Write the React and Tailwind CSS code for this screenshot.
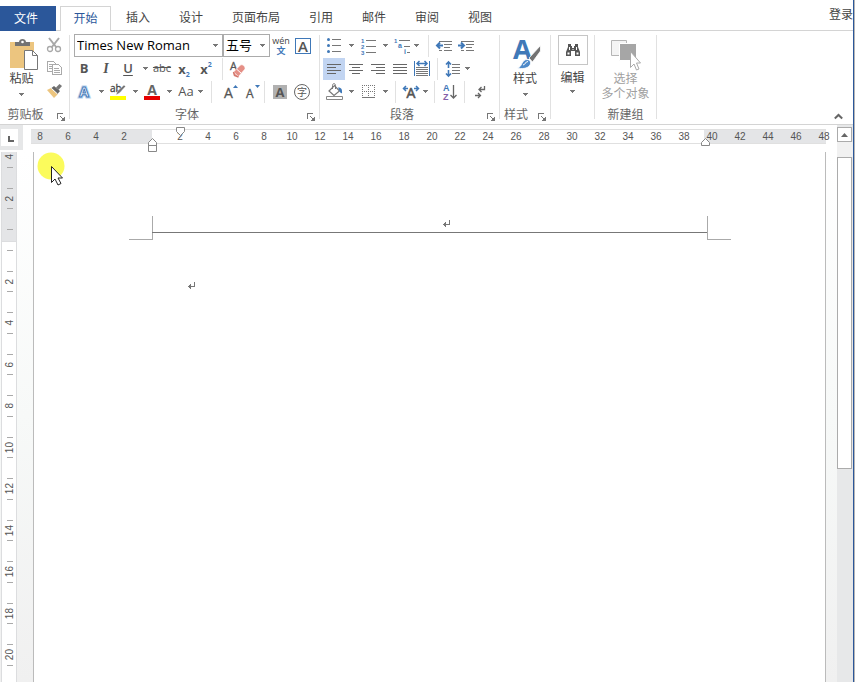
import React from 'react'

const TABS = ['插入', '设计', '页面布局', '引用', '邮件', '审阅', '视图']
const H_RULER = [8, 6, 4, 2, '', ...Array.from({ length: 24 }, (_, i) => (i + 1) * 2)]
const V_RULER = [4, 2, '', ...Array.from({ length: 11 }, (_, i) => (i + 1) * 2)]

const SANS = "font-['Open_Sans','Noto_Sans_CJK_SC',sans-serif]"

/* ---------- small ribbon parts ---------- */

const Arrow = ({ className = '' }) => (
  <svg width="5" height="3" viewBox="0 0 5 3" className={className} shapeRendering="crispEdges">
    <path d="M0 0h5v1H4v1H3v1H2V2H1V1H0z" fill="#777" />
  </svg>
)

const Caret = ({ label, className = 'justify-center' }) => (
  <button aria-label={label} className={`flex h-[22px] w-3 shrink-0 items-center ${className}`}>
    <Arrow />
  </button>
)

const Tool = ({ label, active, children }) => (
  <button
    aria-label={label}
    className={`flex h-[22px] w-[22px] shrink-0 items-center justify-center ${active ? 'bg-[#c2d5f2]' : ''}`}
  >
    {children}
  </button>
)

const Sep = ({ className = '' }) => <div className={`h-[22px] w-px shrink-0 bg-[#e1e1e1] ${className}`} />

const Row = ({ children }) => <div className="flex h-[23px] items-center">{children}</div>

const Launcher = ({ label }) => (
  <button aria-label={label} className="mt-1 shrink-0">
    <svg width="8" height="8" viewBox="0 0 8 8" fill="none" stroke="#777" shapeRendering="crispEdges">
      <path d="M.5 6V.5H6M3 3l4 4M7.5 4v3.500H4M6.500 5v1.500H5" />
    </svg>
  </button>
)

const Group = ({ label, launcher, className = '', children }) => (
  <>
    <section aria-label={label} className={`flex shrink-0 flex-col pt-[3px] ${className}`}>
      <div className="h-[69px]">{children}</div>
      <div className={`flex h-[21px] items-center pt-0.5 text-[#666] ${launcher ? 'pr-1' : ''}`}>
        <span className={`flex-1 text-center ${launcher ? 'pr-1.5' : ''}`}>{label}</span>
        {launcher && <Launcher label={`${label}设置`} />}
      </div>
    </section>
    <div className="mt-1 mb-[5px] w-px shrink-0 bg-[#e1e1e1]" />
  </>
)

/* ---------- icons ---------- */

const PasteIcon = () => (
  <svg width="30" height="32" viewBox="0 0 30 32" className="ml-1">
    <path d="M1 3h24v26H1z" fill="#ecc57f" />
    <path d="M6 7V3h4c0-4 7-4 7 0h4v4z" fill="#737373" />
    <circle cx="13.500" cy="3" r="1.300" fill="#fff" />
    <path d="M15.500 11.500h8l5 5v14h-13z" fill="#fff" stroke="#777" />
    <path d="M23.500 11.500v5h5" fill="none" stroke="#777" />
  </svg>
)

const CutIcon = () => (
  <svg width="16" height="16" viewBox="0 0 16 16" fill="none" stroke="#a8a8a8">
    <path d="M3 1l7.500 9.500M13 1L5.500 10.500" strokeWidth="2" />
    <circle cx="4" cy="12" r="2.500" strokeWidth="1.300" />
    <circle cx="12" cy="12" r="2.500" strokeWidth="1.300" />
  </svg>
)

const CopyIcon = () => (
  <svg width="16" height="16" viewBox="0 0 16 16" fill="#fff" stroke="#aaa" shapeRendering="crispEdges">
    <path d="M1.500 1.500h6l2 2v8h-8z" />
    <path d="M3 4.500h4M3 6.500h4M3 8.500h4" />
    <path d="M6.500 4.500h6l3 3v7h-9z" />
    <path d="M8 8.500h5M8 10.500h6M8 12.500h6" />
  </svg>
)

const BrushIcon = () => (
  <svg width="17" height="16" viewBox="0 0 17 16">
    <path d="M1 7l4-2 7 6-4 4z" fill="#ecc57f" />
    <path d="M5.500 5l2.500-2 6 5-2.500 3z" fill="#666" />
    <path d="M10 4.500L13.500 1 16 3l-3.500 4z" fill="#777" />
    <path d="M5.500 5.500l6 5.500" stroke="#fff" />
  </svg>
)

const PinyinIcon = () => (
  <svg width="18" height="20" viewBox="0 0 18 20">
    <text x="9" y="8" textAnchor="middle" fontSize="9" fill="#444">wén</text>
    <text x="9" y="18" textAnchor="middle" fontSize="9" fontWeight="bold" fill="#3f78b8">文</text>
  </svg>
)

const EraserIcon = () => (
  <svg width="18" height="18" viewBox="0 0 18 18">
    <text x="1" y="10" fontSize="11" fill="#555" stroke="#555" strokeWidth=".3">A</text>
    <path d="M4.500 12l7-7c2-1 5 1.500 4.500 4l-6.500 7.500z" fill="#e58f86" stroke="#fff" strokeWidth=".6" />
    <path d="M7.500 9l5 4.500" stroke="#fff" />
    <path d="M4.500 12l1 3.500 4 1.500" stroke="#d4776d" strokeWidth="1.500" fill="#e9a59d" />
  </svg>
)

const EffectIcon = () => (
  <svg width="18" height="18" viewBox="0 0 18 18">
    <text x="9" y="14" textAnchor="middle" fontSize="14" fontWeight="bold" fill="#fff" stroke="#b9d3ee" strokeWidth="3">A</text>
    <path d="M6 12L9 4l3 8z" fill="#fff" />
    <text x="9" y="14" textAnchor="middle" fontSize="14" fontWeight="bold" fill="#fff" stroke="#3f78b8">A</text>
  </svg>
)

const HighlightIcon = () => (
  <svg width="18" height="18" viewBox="0 0 18 18">
    <text x="1" y="9" fontSize="10" fill="#444" stroke="#444" strokeWidth=".3">ab</text>
    <path d="M7 12l1.500-4L15 2l1.500 1.500L10.500 10z" fill="#777" stroke="#fff" strokeWidth=".4" />
    <path d="M1 13h16v4H1z" fill="#ff0" />
  </svg>
)

const FontColorIcon = () => (
  <svg width="18" height="18" viewBox="0 0 18 18">
    <text x="9" y="12" textAnchor="middle" fontSize="14" fontWeight="bold" fill="#666">A</text>
    <path d="M1 13h16v4H1z" fill="#e60000" />
  </svg>
)

const SizeIcon = ({ down }) => (
  <svg width="18" height="18" viewBox="0 0 18 18">
    <text x="2" y="15" fontSize={down ? 12 : 14} fill="#555" stroke="#555" strokeWidth=".3">A</text>
    <path d={down ? 'M11 2h5l-2.500 3z' : 'M11 5h5l-2.500-3z'} fill="#3f78b8" />
  </svg>
)

const BulletsIcon = () => (
  <svg width="16" height="17" viewBox="0 0 16 17">
    {[2.5, 8.5, 14.5].map((y) => (
      <circle key={y} cx="2.500" cy={y} r="1.500" fill="#3f78b8" />
    ))}
    <path d="M6 2.500h9M6 8.500h9M6 14.500h9" stroke="#777" />
  </svg>
)

const NumbersIcon = () => (
  <svg width="16" height="18" viewBox="0 0 16 18" className="font-['Liberation_Sans',sans-serif]">
    {[1, 2, 3].map((n) => (
      <text key={n} x="1" y={n * 6} fontSize="6" fontWeight="bold" fill="#3f78b8">{n}</text>
    ))}
    <path d="M6 3.500h10M6 9.500h10M6 15.500h10" stroke="#777" />
  </svg>
)

const MultiIcon = () => (
  <svg width="17" height="18" viewBox="0 0 17 18" fontSize="7" fontWeight="bold" className="font-['Liberation_Sans',sans-serif]">
    <text x="0" y="6" fill="#3f78b8" fontSize="6">1</text>
    <text x="4" y="11" fill="#3f78b8">a</text>
    <text x="10" y="17" fill="#3f78b8">i</text>
    <path d="M5 3.500h11M10 9.500h6M13 15.500h3" stroke="#777" />
  </svg>
)

const IndentIcon = ({ right }) => (
  <svg width="17" height="12" viewBox="0 0 17 12">
    <path d="M3 1.500h13M8 4.500h8M8 7.500h6M3 10.500h3M8 10.500h8" stroke="#777" />
    <path
      d={right ? 'M0 5.500h5.500M3 2.500l3 3-3 3' : 'M7 5.500H1M4 2.500l-3 3 3 3'}
      fill="none"
      stroke="#3f78b8"
      strokeWidth="2"
    />
  </svg>
)

const ALIGN = {
  left: 'M0 .5h14M0 3.500h9M0 6.500h14M0 9.500h9',
  center: 'M0 .5h14M3 3.500h8M0 6.500h14M3 9.500h8',
  right: 'M0 .5h14M5 3.500h9M0 6.500h14M5 9.500h9',
  justify: 'M0 .5h14M0 3.500h14M0 6.500h14M0 9.500h14',
}

const AlignIcon = ({ kind }) => (
  <svg width="14" height="10" viewBox="0 0 14 10" stroke="#666" shapeRendering="crispEdges">
    <path d={ALIGN[kind]} />
  </svg>
)

const DistributeIcon = () => (
  <svg width="16" height="17" viewBox="0 0 16 17" fill="none">
    <path d="M.5 1v15M15.500 1v15" stroke="#3f78b8" />
    <path d="M3 3.500h10M5.500 1L3 3.500 5.500 6M10.500 1L13 3.500 10.500 6" stroke="#3f78b8" strokeWidth="1.500" />
    <path d="M2 7.500h12M2 9.500h12M2 11.500h12M2 13.500h12M2 15.500h12" stroke="#777" />
  </svg>
)

const SpacingIcon = () => (
  <svg width="16" height="16" viewBox="0 0 16 16" fill="none">
    <path d="M3.500 1v6M3.500 9v6M1 3.500L3.500 1 6 3.500M1 12.500L3.500 15 6 12.500" stroke="#3f78b8" strokeWidth="1.600" />
    <path d="M7 3.500h8M7 6.500h8M7 9.500h8M7 12.500h8" stroke="#777" />
  </svg>
)

const BucketIcon = () => (
  <svg width="17" height="17" viewBox="0 0 17 17" fill="none">
    <path d="M3 8l5.500-5.500L13.500 8 8 12.500z" fill="#fff" stroke="#777" strokeWidth="1.200" />
    <path d="M6.500 6V2.500c0-2.500 3-2.500 3 0V6" stroke="#777" />
    <path d="M12 4.500c3 0 4.500 1.500 4 6-1-.5-2-1-2.500-2.500z" fill="#3f78b8" />
    <path d="M.5 13.500h16v3H.5z" fill="#fff" stroke="#888" />
  </svg>
)

const BorderIcon = () => (
  <svg width="13" height="13" viewBox="0 0 13 13" stroke="#777" shapeRendering="crispEdges">
    <path d="M0 .5h13M0 6.500h13M.5 0v12M6.500 0v12M12.500 0v12" strokeDasharray="1 1" />
    <path d="M0 12.500h13" />
  </svg>
)

const CharScaleIcon = () => (
  <svg width="18" height="16" viewBox="0 0 18 16" fill="none">
    <text x="9" y="14" textAnchor="middle" fontSize="14" fill="#555" stroke="#555" strokeWidth=".6">A</text>
    <path d="M6 4.500H2M4 2L1.500 4.500 4 7M12 4.500h4M14 2l2.500 2.500L14 7" stroke="#3f78b8" strokeWidth="1.500" />
  </svg>
)

const SortIcon = () => (
  <svg width="16" height="18" viewBox="0 0 16 18" fill="none" className="font-['Liberation_Sans',sans-serif]">
    <text x="1" y="8" fontSize="9" fontWeight="bold" fill="#3f78b8">A</text>
    <text x="1" y="17" fontSize="9" fontWeight="bold" fill="#8560a8">Z</text>
    <path d="M11.500 2v13M8.500 12l3 3 3-3" stroke="#666" strokeWidth="1.300" />
  </svg>
)

const MarkIcon = () => (
  <svg width="12" height="14" viewBox="0 0 12 14" fill="none" stroke="#666" strokeWidth="1.300">
    <path d="M10.500 1v3.500H5M7.500 2L5 4.500 7.500 7M1 10.500h5M4 8l2.500 2.500L4 13" />
  </svg>
)

const StyleIcon = () => (
  <svg width="29" height="32" viewBox="0 0 29 32" className="ml-1">
    <text x="0" y="20" fontSize="27" fontWeight="bold" fill="#4079b8">A</text>
    <path d="M16 19l3.500 4L27.500 12V6.500z" fill="#737373" stroke="#fff" strokeWidth=".8" />
    <path d="M4.500 29c4.500-.5 4-8.500 9.500-8.500 3 0 4.500 3 3 5.500-2.500 4-9 4-12.500 3z" fill="#4f8ac9" stroke="#fff" strokeWidth=".8" />
    <path d="M10 26c3-.5 2-3.500 5-3.500" stroke="#fff" fill="none" />
  </svg>
)

const FindIcon = () => (
  <svg width="16" height="14" viewBox="0 0 16 14">
    <path d="M3 1h3v2h1v2h2V3h1V1h3v3l2 5v4h-5V8H6v5H1V9l2-5z" fill="#555" />
    <path d="M2.500 9.500h2v2h-2zM11.500 9.500h2v2h-2zM4 4h1v3H4zM11 4h1v3h-1zM7.500 6h1v1h-1z" fill="#fff" />
  </svg>
)

const SelectIcon = () => (
  <svg width="31" height="32" viewBox="0 0 31 32">
    <path d="M1.500 1.500h15v15h-15z" fill="#f4f4f4" stroke="#b5b5b5" />
    <path d="M9.500 4.500h17v17h-17z" fill="#a6a6a6" stroke="#fff" />
    <path d="M20.500 12.500v16l3.500-3.500 2.500 6 2.500-1-2.500-6h4z" fill="#fff" stroke="#aaa" />
  </svg>
)

const ReturnMark = ({ className = '' }) => (
  <svg width="8" height="8" viewBox="0 0 8 8" fill="none" stroke="#777" className={className} shapeRendering="crispEdges">
    <path d="M7.500 0v4.500H1M3.500 2v5M2.500 3v3" />
  </svg>
)

/* ---------- ribbon ---------- */

const TabBar = () => (
  <nav className="flex h-[31px] shrink-0 items-end border-b border-[#d4d4d4] text-[#444]">
    <button className="-mb-px h-[25px] w-14 shrink-0 bg-[#2b579a] pr-1 text-white">文件</button>
    <button className="-mb-px ml-1 h-[25px] w-[51px] shrink-0 border border-b-0 border-[#d4d4d4] bg-white text-[#2b579a]">
      开始
    </button>
    <div className="ml-[15px] flex h-6 items-center gap-[29px]">
      {TABS.map((t) => (
        <button key={t} className="shrink-0">{t}</button>
      ))}
    </div>
    <button className="mb-[3px] ml-auto h-6 shrink-0 whitespace-nowrap">登录</button>
  </nav>
)

const ClipboardGroup = () => (
  <Group label="剪贴板" launcher className="w-[69px]">
    <div className="flex">
      <button className="flex w-[43px] flex-col items-center pt-[5px] leading-4">
        <PasteIcon />
        <span className="text-[#444]">粘贴</span>
        <Arrow className="mt-1.5" />
      </button>
      <div className="flex flex-col gap-px">
        <Tool label="剪切"><CutIcon /></Tool>
        <Tool label="复制"><CopyIcon /></Tool>
        <Tool label="格式刷"><BrushIcon /></Tool>
      </div>
    </div>
  </Group>
)

const Combo = ({ label, value, className }) => (
  <label className={`relative block h-[23px] shrink-0 border border-[#ababab] ${className}`}>
    <select aria-label={label} className="h-full w-full appearance-none bg-white pl-0.5 text-[13px] text-black">
      <option>{value}</option>
    </select>
    <Arrow className="pointer-events-none absolute top-[9px] right-1" />
  </label>
)

const FontGroup = () => (
  <Group label="字体" launcher className="w-[249px] pl-[3px]">
    <Row>
      <Combo label="字体" value="Times New Roman" className="ml-px w-[149px]" />
      <Combo label="字号" value="五号" className="w-[47px]" />
      <Tool label="拼音指南"><PinyinIcon /></Tool>
      <Tool label="字符边框">
        <span className="h-4 w-4 border border-[#3f78b8] text-[15px] leading-[14px] font-semibold">A</span>
      </Tool>
    </Row>
    <Row>
      <Tool label="加粗"><b className="text-[13px]">B</b></Tool>
      <Tool label="倾斜"><i className="font-['Liberation_Serif',serif] text-sm font-bold">I</i></Tool>
      <Tool label="下划线"><u className="text-[13px] font-semibold underline-offset-2">U</u></Tool>
      <Caret label="下划线样式" />
      <Tool label="删除线"><s className="text-[11px]">abc</s></Tool>
      <Tool label="下标">
        <span className="flex text-[13px] leading-4 font-bold">x<sub className="top-1.5 text-[7px] leading-4 text-[#3f78b8]">2</sub></span>
      </Tool>
      <Tool label="上标">
        <span className="flex text-[13px] leading-4 font-bold">x<sup className="-top-1 text-[7px] leading-4 text-[#3f78b8]">2</sup></span>
      </Tool>
      <Sep className="mr-1 ml-[5px]" />
      <Tool label="清除格式"><EraserIcon /></Tool>
    </Row>
    <Row>
      <Tool label="文本效果"><EffectIcon /></Tool>
      <Caret label="更多文本效果" />
      <Tool label="突出显示"><HighlightIcon /></Tool>
      <Caret label="突出显示颜色" />
      <Tool label="字体颜色"><FontColorIcon /></Tool>
      <Caret label="更多字体颜色" />
      <Tool label="更改大小写"><span className="text-[13px]">Aa</span></Tool>
      <Caret label="大小写选项" className="pl-px" />
      <Sep className="mr-2 ml-0.5" />
      <Tool label="增大字号"><SizeIcon /></Tool>
      <Tool label="减小字号"><SizeIcon down /></Tool>
      <Sep className="mr-1" />
      <Tool label="字符底纹">
        <span className="h-3.5 w-3.5 bg-[#b1b1b1] text-[13px] leading-[14px] font-bold">A</span>
      </Tool>
      <Tool label="带圈字符">
        <span className="h-4 w-4 rounded-full border border-[#666] text-[10px] leading-[14px]">字</span>
      </Tool>
    </Row>
  </Group>
)

const ParagraphGroup = () => (
  <Group label="段落" launcher className="w-[179px] pl-[3px]">
    <Row>
      <Tool label="项目符号"><BulletsIcon /></Tool>
      <Caret label="项目符号库" />
      <Tool label="编号"><NumbersIcon /></Tool>
      <Caret label="编号库" />
      <Tool label="多级列表"><MultiIcon /></Tool>
      <Caret label="列表库" className="pl-px" />
      <Sep className="mr-1 ml-[3px]" />
      <Tool label="减少缩进量"><IndentIcon /></Tool>
      <Tool label="增加缩进量"><IndentIcon right /></Tool>
    </Row>
    <Row>
      <Tool label="左对齐" active><AlignIcon kind="left" /></Tool>
      <Tool label="居中"><AlignIcon kind="center" /></Tool>
      <Tool label="右对齐"><AlignIcon kind="right" /></Tool>
      <Tool label="两端对齐"><AlignIcon kind="justify" /></Tool>
      <Tool label="分散对齐"><DistributeIcon /></Tool>
      <Sep className="mx-1" />
      <Tool label="行距"><SpacingIcon /></Tool>
      <Caret label="行距选项" className="pl-px" />
    </Row>
    <Row>
      <Tool label="底纹"><BucketIcon /></Tool>
      <Caret label="底纹颜色" />
      <Tool label="边框"><BorderIcon /></Tool>
      <Caret label="边框样式" />
      <Sep className="mx-1" />
      <Tool label="中文版式"><CharScaleIcon /></Tool>
      <Caret label="版式选项" className="pl-px" />
      <Sep className="mr-1" />
      <Tool label="排序"><SortIcon /></Tool>
      <Sep className="mr-1 ml-[3px]" />
      <Tool label="显示编辑标记"><MarkIcon /></Tool>
    </Row>
  </Group>
)

const Ribbon = () => (
  <header className="flex h-[94px] shrink-0 border-b border-[#d4d4d4] text-[#555]">
    <ClipboardGroup />
    <FontGroup />
    <ParagraphGroup />
    <Group label="样式" launcher className="w-[50px]">
      <button className="flex w-full flex-col items-center pt-[5px] leading-4 text-[#444]">
        <StyleIcon />
        <span>样式</span>
        <Arrow className="mt-1.5" />
      </button>
    </Group>
    <Group className="w-[43px]">
      <button className="flex w-full flex-col items-center pt-px leading-4 text-[#444]">
        <span className="mb-[5px] flex h-[30px] w-[30px] items-center justify-center border border-[#c6c6c6]">
          <FindIcon />
        </span>
        <span>编辑</span>
        <Arrow className="mt-1" />
      </button>
    </Group>
    <Group label="新建组" className="w-[61px]">
      <button disabled className="flex w-full flex-col items-center pt-[5px] leading-[15px] text-[#a0a0a0]">
        <SelectIcon />
        <span>选择</span>
        <span>多个对象</span>
      </button>
    </Group>
    <button aria-label="折叠功能区" className="mt-auto mr-2.5 mb-1 ml-auto">
      <svg width="9" height="7" viewBox="0 0 9 7" fill="none" stroke="#666" strokeWidth="2">
        <path d="M.8 5.500L4.500 2l3.700 3.500" />
      </svg>
    </button>
  </header>
)

/* ---------- rulers, page, scroll bar ---------- */

const HorizontalRuler = () => (
  <div className="flex h-[27px] shrink-0">
    <div className="h-[25px] w-[23px] shrink-0 bg-[#e6e7e8] pt-1 pl-px">
      <button aria-label="制表符" className="flex h-[17px] w-[17px] items-center justify-center bg-white pt-0.5 pl-0.5">
        <svg width="6" height="6" viewBox="0 0 6 6" fill="#666"><path d="M0 0h2v4h4v2H0z" /></svg>
      </button>
    </div>
    <div className="relative mt-1 mr-[11px] ml-2 grid h-[15px] flex-1 grid-cols-[minmax(0,1fr)] text-[10px] text-[#555]">
      <div className="col-start-1 row-start-1 flex border-y border-[#e0e0e0] bg-[#e4e5e7]">
        <div className="ml-[121px] w-[552px] bg-white" />
      </div>
      <div className="col-start-1 row-start-1 -ml-[5px] flex font-['Liberation_Sans',sans-serif] leading-[15px]">
        {H_RULER.map((n, i) => (
          <span key={i} className="w-7 shrink-0 text-center">{n}</span>
        ))}
      </div>
      {/* indent handles */}
      <svg width="9" height="9" viewBox="0 0 9 9" className="absolute -top-0.5 left-[145px]">
        <path d="M.5.5h8v4l-4 4-4-4z" fill="#fff" stroke="#888" />
      </svg>
      <svg width="9" height="14" viewBox="0 0 9 14" className="absolute top-[9px] left-[117px]">
        <path d="M.5 13.500v-9l4-4 4 4v9zM.5 7.500h8" fill="#fff" stroke="#888" />
      </svg>
      <svg width="9" height="8" viewBox="0 0 9 8" className="absolute top-[9px] left-[670px]">
        <path d="M.5 7.500v-3l4-4 4 4v3z" fill="#fff" stroke="#888" />
      </svg>
    </div>
  </div>
)

const VerticalRuler = () => (
  <div className="ml-px grid w-4 shrink-0 grid-cols-1 overflow-hidden border-x border-[#dcdddf] bg-white text-[10px] text-[#555]">
    <div className="col-start-1 row-start-1 h-[90px] border-b border-[#dcdddf] bg-[#e4e5e7]" />
    <div className="col-start-1 row-start-1 -mt-4 pl-0.5 font-['Liberation_Sans',sans-serif]">
      {V_RULER.map((n, i) => (
        <div
          key={i}
          className={`flex flex-col items-center justify-between py-2.5 leading-none ${i % 2 ? 'h-[41px]' : 'h-[42px]'}`}
        >
          <i className="h-px w-1.5 bg-[#aaa]" />
          <span className="rotate-180 [writing-mode:vertical-rl]">{n}</span>
          <i className="h-px w-1.5 bg-[#aaa]" />
        </div>
      ))}
    </div>
  </div>
)

const Page = () => (
  <main className="mr-[11px] ml-4 flex-1 border-x border-[#bbb] bg-white pt-16">
    <div className="flex pr-[94px] pl-[95px]">
      <div className="h-6 w-6 border-r border-b border-[#aaa]" />
      <div className="-mx-px h-[17px] flex-1 border-b border-[#777] pt-1 pl-8">
        <ReturnMark className="mx-auto" />
      </div>
      <div className="h-6 w-6 border-b border-l border-[#aaa]" />
    </div>
    <ReturnMark className="mt-[42px] ml-[153px]" />
  </main>
)

const Pointer = () => (
  <svg width="30" height="36" viewBox="0 0 30 36" className="pointer-events-none absolute top-0 left-[37px]">
    <circle cx="14" cy="14" r="13.500" fill="#fbfb5c" />
    <path d="M14.500 14.500v16l3.500-3.500 3 6 3-1.500-3-5.500h4.500z" fill="#fff" stroke="#222" />
  </svg>
)

const ScrollBar = () => (
  <div className="flex w-4 shrink-0 flex-col bg-[#e7e8e9] pt-0.5">
    <button aria-label="向上滚动" className="flex h-[15px] w-[15px] items-center justify-center border border-[#ababab] bg-white">
      <svg width="7" height="4" viewBox="0 0 7 4" fill="#666"><path d="M0 4l3.500-4L7 4z" /></svg>
    </button>
    <div className="h-[15px] bg-[#f1f1f1]" />
    <div className="h-[312px] w-[15px] border border-[#ababab] bg-white" />
  </div>
)

export default function App() {
  return (
    <div className={`flex h-screen bg-white text-xs [&_svg]:overflow-visible ${SANS}`}>
      <div className="flex min-w-0 flex-1 flex-col">
        <TabBar />
        <Ribbon />
        <div className="flex min-h-0 flex-1">
          <div className="flex min-w-0 flex-1 flex-col">
            <HorizontalRuler />
            <div className="relative flex min-h-0 flex-1 bg-linear-to-b from-white via-[#f7f9f8] to-[#f0f0f0]">
              <VerticalRuler />
              <Page />
              <Pointer />
            </div>
          </div>
          <ScrollBar />
        </div>
      </div>
      <div className="w-0.5 shrink-0 border-r border-[#b5b5b5] bg-[#2b579a]" />
    </div>
  )
}
